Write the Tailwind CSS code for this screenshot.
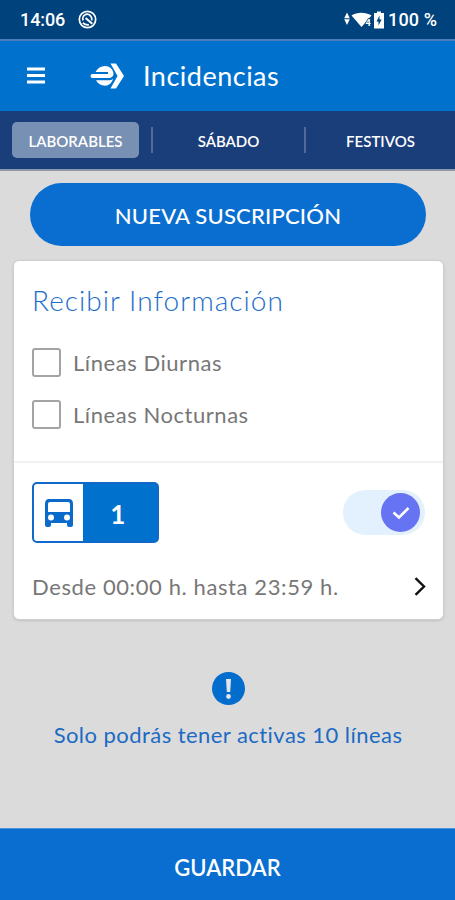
<!DOCTYPE html>
<html lang="es">
<head>
  <meta charset="UTF-8">
  <meta name="viewport" content="width=device-width, initial-scale=1.0">
  <title>Incidencias</title>
  <script src="https://cdn.jsdelivr.net/npm/@tailwindcss/browser@4"></script>
</head>
<body class="w-[455px] h-[900px] overflow-hidden bg-[#dbdbdb] font-['Lato',sans-serif] [font-variant-ligatures:none] flex flex-col">
  <!-- Status bar -->
  <div class="h-[39px] shrink-0 bg-[#00427b] flex items-center justify-between pl-5 pr-[18px] text-white font-['Roboto',sans-serif] font-medium text-[18px]">
    <div class="flex items-center gap-[13px]">
      <span class="tracking-[-0.1px]">14:06</span>
      <svg class="w-[19px] h-[19px]" viewBox="0 0 20 20" fill="none" stroke="white">
        <circle cx="10" cy="10" r="8.6" stroke-width="1.8"/>
        <path d="M5.500 11a4.600 4.600 0 0 1 8-4.500q1.500 2 1 4.500M5 13.500q3 2.500 6.500 2" stroke-width="1.800"/>
        <path d="M8 8.500l7 6" stroke-width="2.200"/>
      </svg>
    </div>
    <div class="flex items-center">
      <svg class="w-[43px] h-[20px] mr-[3px]" viewBox="0 0 43 20" fill="white">
        <path d="M5 2.500l2.800 5.800H2.200zM2.200 9.200h5.600L5 15z"/>
        <path d="M9.500 5.500C15 1.800 23.500 1.800 29.500 5.500L19.500 17z"/>
        <text x="23.500" y="15.500" font-size="9" font-weight="700" stroke="#00427b" stroke-width="1.500" paint-order="stroke">4</text>
        <path d="M32 3h3V1.500h4V3h3v15.500H32V3z"/>
        <path d="M37.500 5.500l-3 6h2v4l3.200-6h-2.200z" fill="#00427b"/>
      </svg>
      <span class="tracking-[0.1px]">100 %</span>
    </div>
  </div>

  <!-- App header -->
  <header class="h-[72px] shrink-0 bg-[#0072ce] border-t-2 border-[#4a7fb8] flex items-center text-white">
    <svg class="w-[18px] h-[17px] ml-[27px] -mt-[2px]" viewBox="0 0 18 17" fill="white">
      <path d="M0 0.500h18v3H0zM0 7h18v3H0zM0 13.500h18v3H0z"/>
    </svg>
    <svg class="w-[34px] h-[26px] ml-[45px]" viewBox="0 0 34 26" fill="none">
      <path d="M20.500 0.500H26L34 13L26 25.500H20.500L27.500 13z" fill="white"/>
      <path d="M5.500 9C7.500 5 11 3 15 3c4.500 0 8 3 8.500 7.500 0 2.800-2 4.500-4.500 4.500H2.500a2 2 0 0 1 0-4H17.500V9z" fill="white"/>
      <path d="M6 17.300H19q2.500 0 4-1.500C22 20 19 22.700 15 22.700c-4 0-7.200-2-9-5.400z" fill="white"/>
      <path d="M9 10h9" stroke="#0072ce" stroke-width="2"/>
    </svg>
    <h1 class="ml-[19px] text-[27px] leading-[32px] tracking-[0.5px]">Incidencias</h1>
  </header>

  <!-- Day tabs -->
  <nav class="h-[60px] shrink-0 bg-[#1a3e7a] border-b-2 border-[#8d97aa] flex items-center text-white text-[15px] font-semibold">
    <div class="ml-3 w-[127px] h-[36px] rounded-[5px] bg-[#7890b3] flex items-center justify-center pt-[2px]">LABORABLES</div>
    <div class="ml-[12px] w-[2px] h-[26px] bg-[#52699a]"></div>
    <div class="w-[151px] text-center pt-[2px]">SÁBADO</div>
    <div class="w-[2px] h-[26px] bg-[#52699a]"></div>
    <div class="w-[149px] text-center pt-[2px]">FESTIVOS</div>
  </nav>

  <main class="flex-1 flex flex-col">
    <button class="mt-3 ml-[30px] w-[396px] h-[63px] rounded-full bg-[#0a6ed0] text-white text-[22px] font-medium tracking-[0.2px] pt-px">NUEVA SUSCRIPCIÓN</button>

    <!-- Subscription card -->
    <section class="mt-[14px] ml-[13px] w-[431px] h-[360px] bg-white rounded-[6px] border border-[#cfcfcf] shadow-sm text-[#777777] text-[22px] tracking-[0.55px]">
      <div class="h-[202px] border-b-2 border-[#f1f1f1] pl-[18px] pt-[21px]">
        <h2 class="text-[28px] leading-[36px] font-light text-[#1b6dca] tracking-[1.05px]">Recibir Información</h2>
        <label class="mt-[29px] flex items-center gap-[12px] leading-[30px]">
          <span class="w-[29px] h-[29px] rounded-[3px] border-2 border-[#a4a4a4]"></span>
          <span class="pt-px">Líneas Diurnas</span>
        </label>
        <label class="mt-[21px] flex items-center gap-[12px] leading-[30px]">
          <span class="w-[29px] h-[29px] rounded-[3px] border-2 border-[#a4a4a4]"></span>
          <span class="pt-px">Líneas Nocturnas</span>
        </label>
      </div>
      <div class="flex items-center justify-between pl-[18px] pr-[18px] pt-[19px]">
        <div class="w-[127px] h-[61px] rounded-[5px] border-2 border-[#1268c8] bg-[#0072ce] overflow-hidden flex">
          <div class="w-[49px] bg-white flex items-center justify-center">
            <svg class="w-[28px] h-[28px]" viewBox="0 0 28 28">
              <path d="M4 0h20q4 0 4 5v21q0 2-2 2h-2q-2 0-2-2v-2H6v2q0 2-2 2H2q-2 0-2-2V5q0-5 4-5z" fill="#0a6bcb"/>
              <path d="M5 3h18q2 0 2 2v8H3V5q0-2 2-2z" fill="white"/>
              <circle cx="6" cy="18.500" r="3" fill="white"/>
              <circle cx="22" cy="18.500" r="3" fill="white"/>
            </svg>
          </div>
          <div class="flex-1 pr-[4px] pt-[3px] flex items-center justify-center text-white text-[26px] font-bold">1</div>
        </div>
        <div class="w-[82px] h-[45px] rounded-full bg-[#e2f1fd] flex items-center justify-end pr-[5px]">
          <div class="w-[39px] h-[39px] rounded-full bg-[#6674f4] flex items-center justify-center">
            <svg class="w-[18px] h-[14px]" viewBox="0 0 18 14" fill="none" stroke="white" stroke-width="2.600"><path d="M1.500 6.500L7 11.500L16.500 2"/></svg>
          </div>
        </div>
      </div>
      <div class="mt-[28px] flex items-center justify-between pl-[18px] pr-[17px] leading-[30px]">
        <span class="pt-px tracking-[0.6px]">Desde 00:00 h. hasta 23:59 h.</span>
        <svg class="w-[12px] h-[19px] -mt-px" viewBox="0 0 12 19" fill="none" stroke="#111" stroke-width="2.400"><path d="M1.500 1.200L10 9.500L1.500 17.800"/></svg>
      </div>
    </section>

    <!-- Limit notice -->
    <div class="mt-[52px] pl-px flex flex-col items-center text-[#1b6ac4]">
      <svg class="w-[33px] h-[33px]" viewBox="0 0 33 33">
        <circle cx="16.500" cy="16.500" r="16.500" fill="#036dcd"/>
        <path d="M14 7h5l-.8 13h-3.400z" fill="#e2e5e8"/>
        <circle cx="16.500" cy="24.500" r="2.400" fill="#e2e5e8"/>
      </svg>
      <p class="mt-[15px] text-[22px] leading-[30px] tracking-[0.45px]">Solo podrás tener activas 10 líneas</p>
    </div>
  </main>

  <button class="h-[72px] shrink-0 bg-[#0a6ed0] text-white text-[22px] font-semibold pt-[6px] border-t border-[#4b92db]">GUARDAR</button>
</body>
</html>
